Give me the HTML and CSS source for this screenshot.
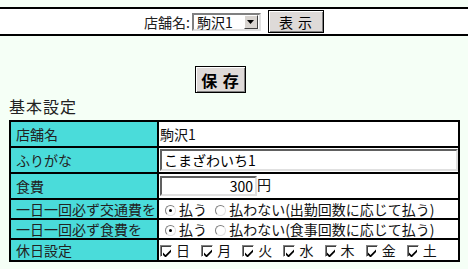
FILE: index.html
```html
<!DOCTYPE html>
<html lang="ja">
<head>
    <meta charset="UTF-8">
    <title>基本設定</title>
    <link rel="stylesheet" href="styles.css">
</head>
<body>

<div class="topbar">
    <span class="shop-label">店舗名:</span>
    <div class="select">
        <span class="select-value">駒沢1</span>
        <span class="select-arrow">
            <svg width="7" height="4" viewBox="0 0 7 4"><path d="M0 0h7L3.5 4z" fill="#000"/></svg>
        </span>
    </div>
    <button class="btn btn-show">表 示</button>
</div>

<div class="save-row">
    <button class="btn btn-save">保 存</button>
</div>

<div class="section-title">基本設定</div>

<table class="settings">
    <tr class="row-tall">
        <th>店舗名</th>
        <td>駒沢1</td>
    </tr>
    <tr class="row-tall">
        <th>ふりがな</th>
        <td><input class="text-input kana" type="text" value="こまざわいち1"></td>
    </tr>
    <tr class="row-tall">
        <th>食費</th>
        <td><input class="text-input money" type="text" value="300">円</td>
    </tr>
    <tr class="row-short">
        <th>一日一回必ず交通費を</th>
        <td>
            <span class="radio checked"></span>払う
            <span class="radio"></span>払わない(出勤回数に応じて払う)
        </td>
    </tr>
    <tr class="row-short">
        <th>一日一回必ず食費を</th>
        <td>
            <span class="radio checked"></span>払う
            <span class="radio"></span>払わない(食事回数に応じて払う)
        </td>
    </tr>
    <tr class="row-mid">
        <th>休日設定</th>
        <td class="days">
            <span class="day"><span class="check"><svg width="8" height="8" viewBox="0 0 8 8"><path d="M0 3.5l2.5 2.5L8 0.5v2.5L2.5 8.5 0 6z" fill="#000"/></svg></span>日</span>
            <span class="day"><span class="check"><svg width="8" height="8" viewBox="0 0 8 8"><path d="M0 3.5l2.5 2.5L8 0.5v2.5L2.5 8.5 0 6z" fill="#000"/></svg></span>月</span>
            <span class="day"><span class="check"><svg width="8" height="8" viewBox="0 0 8 8"><path d="M0 3.5l2.5 2.5L8 0.5v2.5L2.5 8.5 0 6z" fill="#000"/></svg></span>火</span>
            <span class="day"><span class="check"><svg width="8" height="8" viewBox="0 0 8 8"><path d="M0 3.5l2.5 2.5L8 0.5v2.5L2.5 8.5 0 6z" fill="#000"/></svg></span>水</span>
            <span class="day"><span class="check"><svg width="8" height="8" viewBox="0 0 8 8"><path d="M0 3.5l2.5 2.5L8 0.5v2.5L2.5 8.5 0 6z" fill="#000"/></svg></span>木</span>
            <span class="day"><span class="check"><svg width="8" height="8" viewBox="0 0 8 8"><path d="M0 3.5l2.5 2.5L8 0.5v2.5L2.5 8.5 0 6z" fill="#000"/></svg></span>金</span>
            <span class="day"><span class="check"><svg width="8" height="8" viewBox="0 0 8 8"><path d="M0 3.5l2.5 2.5L8 0.5v2.5L2.5 8.5 0 6z" fill="#000"/></svg></span>土</span>
        </td>
    </tr>
</table>

</body>
</html>
```

FILE: styles.css
```css
body {
    margin: 0;
    background-color: #f5fff6;
    font-family: "Noto Sans CJK JP", "DejaVu Sans", sans-serif;
    font-size: 14px;
    color: #111;
}
.topbar {
    margin-top: 7px;
    height: 25px;
    background-color: #fff;
    border-top: 2px solid #000;
    border-bottom: 2px solid #000;
    display: flex;
    justify-content: center;
    align-items: center;
}
.shop-label {
    font-size: 14px;
    color: #222;
    margin-right: 2px;
    margin-top: 1px;
}
.select {
    width: 65px;
    height: 14px;
    display: flex;
    align-items: center;
    background-color: #fff;
    border: 2px solid;
    border-color: #808080 #e0e0e0 #e0e0e0 #808080;
    margin-top: 1px;
}
.select-value {
    flex: 1;
    padding-left: 3px;
    font-size: 14px;
    line-height: 14px;
}
.select-arrow {
    width: 12px;
    height: 12px;
    margin-right: 1px;
    background-color: #d8d4d0;
    border: 1px solid;
    border-color: #fff #404040 #404040 #fff;
    display: flex;
    justify-content: center;
    align-items: center;
}
.btn {
    font-family: inherit;
    background-color: #dedad8;
    border: 1px solid #000;
    box-shadow: inset 1px 1px 0 #fff, inset -1px -1px 0 #808080;
    padding: 0;
    color: #000;
    cursor: pointer;
}
.btn-show {
    width: 56px;
    height: 23px;
    margin-left: 7px;
    font-size: 14px;
    letter-spacing: 1px;
}
.save-row {
    padding-left: 195px;
    margin-top: 30px;
}
.btn-save {
    width: 51px;
    height: 27px;
    font-size: 16px;
    font-weight: bold;
    letter-spacing: 1px;
    display: block;
}
.section-title {
    margin: 2px 0 0 9px;
    font-size: 16px;
    letter-spacing: 1px;
    color: #222;
    height: 22px;
    line-height: 22px;
}
.settings {
    margin: 3px 0 0 9px;
    width: 451px;
    border-collapse: collapse;
}
.settings th, .settings td {
    border: 2px solid #000;
    padding: 0;
    font-weight: normal;
    text-align: left;
    white-space: nowrap;
    line-height: 16px;
}
.settings th {
    width: 142px;
    padding-left: 5px;
    background-color: #4adcda;
    color: #222;
}
.settings td {
    background-color: #fff;
    padding-left: 1px;
}
.row-tall {
    height: 26px;
}
.row-short {
    height: 20px;
}
.row-mid {
    height: 22px;
}
.text-input {
    font-family: inherit;
    font-size: 14px;
    color: #000;
    background-color: #fff;
    border: 2px solid;
    border-color: #606060 #e0e0e0 #e0e0e0 #606060;
    padding: 0 2px;
    vertical-align: middle;
    box-sizing: border-box;
}
.kana {
    width: 298px;
    height: 22px;
}
.money {
    width: 97px;
    height: 20px;
    text-align: right;
}
.radio {
    display: inline-block;
    width: 9px;
    height: 9px;
    border-radius: 50%;
    border: 1px solid;
    border-color: #808080 #e0e0e0 #e0e0e0 #808080;
    background-color: #fff;
    vertical-align: -1px;
    margin: 0 3px 0 5px;
    position: relative;
}
.radio.checked::after {
    content: "";
    position: absolute;
    left: 3px;
    top: 3px;
    width: 3px;
    height: 3px;
    border-radius: 50%;
    background-color: #000;
}
.days {
    padding-left: 5px;
}
.day {
    display: inline-block;
    width: 38px;
}
.check {
    display: inline-block;
    width: 10px;
    height: 10px;
    border: 1px solid;
    border-color: #808080 #fff #fff #808080;
    box-shadow: inset 1px 1px 0 #404040;
    background-color: #fff;
    vertical-align: -1px;
    margin-right: 4px;
    text-align: center;
    line-height: 10px;
}
.check svg {
    vertical-align: 0;
    margin-top: 1px;
    margin-left: 1px;
}
```
